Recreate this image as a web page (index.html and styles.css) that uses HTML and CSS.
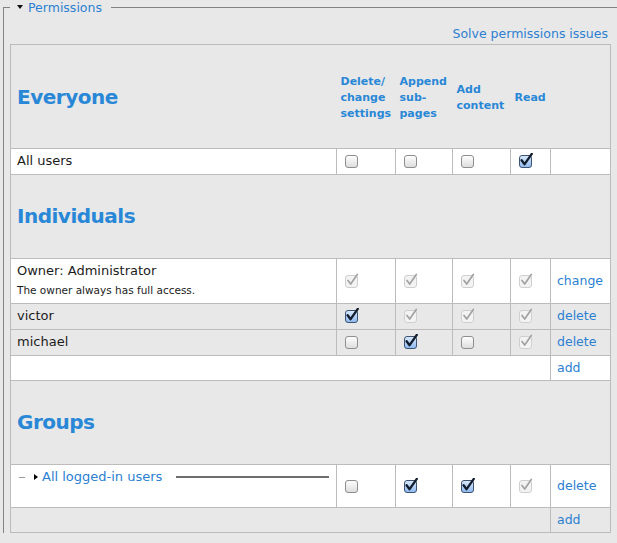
FILE: index.html
```html
<!DOCTYPE html>
<html>
<head>
<meta charset="utf-8">
<title>Permissions</title>
<link rel="stylesheet" href="styles.css">
</head>
<body>
<fieldset class="perm">
  <legend class="perm-legend"><span class="tri-down"></span><a class="lnk" href="#">Permissions</a></legend>
  <div class="solve"><a href="#">Solve permissions issues</a></div>
  <table class="grid">
    <colgroup>
      <col class="c-name"><col class="c-a"><col class="c-b"><col class="c-c"><col class="c-d"><col class="c-e">
    </colgroup>
    <tr class="sect first">
      <td class="h"><h2>Everyone</h2></td>
      <td class="ch">Delete/<br>change<br>settings</td>
      <td class="ch">Append<br>sub-<br>pages</td>
      <td class="ch">Add<br>content</td>
      <td class="ch">Read</td>
      <td class="ch"></td>
    </tr>
    <tr class="w">
      <td class="name">All users</td>
      <td class="cb"><svg class="ck"><use href="#ck-off"/></svg></td>
      <td class="cb"><svg class="ck"><use href="#ck-off"/></svg></td>
      <td class="cb"><svg class="ck"><use href="#ck-off"/></svg></td>
      <td class="cb"><svg class="ck"><use href="#ck-on"/></svg></td>
      <td class="act"></td>
    </tr>
    <tr class="sect">
      <td class="h" colspan="6"><h2>Individuals</h2></td>
    </tr>
    <tr class="w owner">
      <td class="name">Owner: Administrator<div class="desc">The owner always has full access.</div></td>
      <td class="cb"><svg class="ck"><use href="#ck-dis"/></svg></td>
      <td class="cb"><svg class="ck"><use href="#ck-dis"/></svg></td>
      <td class="cb"><svg class="ck"><use href="#ck-dis"/></svg></td>
      <td class="cb"><svg class="ck"><use href="#ck-dis"/></svg></td>
      <td class="act"><a href="#">change</a></td>
    </tr>
    <tr class="g">
      <td class="name">victor</td>
      <td class="cb"><svg class="ck"><use href="#ck-on"/></svg></td>
      <td class="cb"><svg class="ck"><use href="#ck-dis"/></svg></td>
      <td class="cb"><svg class="ck"><use href="#ck-dis"/></svg></td>
      <td class="cb"><svg class="ck"><use href="#ck-dis"/></svg></td>
      <td class="act"><a href="#">delete</a></td>
    </tr>
    <tr class="g">
      <td class="name">michael</td>
      <td class="cb"><svg class="ck"><use href="#ck-off"/></svg></td>
      <td class="cb"><svg class="ck"><use href="#ck-on"/></svg></td>
      <td class="cb"><svg class="ck"><use href="#ck-off"/></svg></td>
      <td class="cb"><svg class="ck"><use href="#ck-dis"/></svg></td>
      <td class="act"><a href="#">delete</a></td>
    </tr>
    <tr class="w addrow">
      <td colspan="5"></td>
      <td class="act"><a href="#">add</a></td>
    </tr>
    <tr class="sect">
      <td class="h" colspan="6"><h2>Groups</h2></td>
    </tr>
    <tr class="w grouprow">
      <td class="name grp-cell">
        <div class="grp"><span class="dash"></span><span class="grp-lg"><span class="tri-right"></span><a href="#">All logged-in users</a></span><span class="line"></span></div>
      </td>
      <td class="cb"><svg class="ck"><use href="#ck-off"/></svg></td>
      <td class="cb"><svg class="ck"><use href="#ck-on"/></svg></td>
      <td class="cb"><svg class="ck"><use href="#ck-on"/></svg></td>
      <td class="cb"><svg class="ck"><use href="#ck-dis"/></svg></td>
      <td class="act"><a href="#">delete</a></td>
    </tr>
    <tr class="g addrow">
      <td colspan="5"></td>
      <td class="act"><a href="#">add</a></td>
    </tr>
  </table>
</fieldset>

<svg class="defs" xmlns="http://www.w3.org/2000/svg">
  <defs>
    <linearGradient id="g-off" x1="0" y1="0" x2="0" y2="1">
      <stop offset="0" stop-color="#ffffff"/>
      <stop offset="1" stop-color="#dcdcdc"/>
    </linearGradient>
    <linearGradient id="g-on" x1="0" y1="0" x2="0" y2="1">
      <stop offset="0" stop-color="#dbeafc"/>
      <stop offset="1" stop-color="#8db8ef"/>
    </linearGradient>
    <symbol id="ck-off" viewBox="0 0 15 15">
      <rect x="0.5" y="2.5" width="12" height="12" rx="2.5" fill="url(#g-off)" stroke="#8e8e8e"/>
    </symbol>
    <symbol id="ck-on" viewBox="0 0 15 15">
      <rect x="0.5" y="2.5" width="12" height="12" rx="2.5" fill="url(#g-on)" stroke="#3d5373"/>
      <path d="M2.6 7.2 L5.6 11.2 L12.8 0.8" fill="none" stroke="#121c2c" stroke-width="2.3" stroke-linecap="round" stroke-linejoin="round"/>
    </symbol>
    <symbol id="ck-dis" viewBox="0 0 15 15">
      <rect x="0.5" y="2.5" width="12" height="12" rx="2.5" fill="#f3f3f3" stroke="#cfcfcf"/>
      <path d="M3 7.4 L5.7 11 L12.3 1.4" fill="none" stroke="#a2a2a2" stroke-width="1.7" stroke-linecap="round" stroke-linejoin="round"/>
    </symbol>
  </defs>
</svg>
</body>
</html>
```
FILE: styles.css
```css
html, body {
  margin: 0;
  padding: 0;
  background: #e8e8e8;
  overflow: hidden;
}
body {
  font-family: "DejaVu Sans", "Liberation Sans", sans-serif;
  font-size: 13px;
  color: #1c1c1c;
}
a {
  color: #2b80d2;
  text-decoration: none;
}

.perm {
  margin: 0 0 0 3px;
  padding: 11px 7px 0 6px;
  border: 1px solid #828282;
  border-right: none;
  border-bottom: none;
  min-width: 0;
}
.perm-legend {
  padding: 0 9px 0 7px;
  font-size: 12.5px;
  line-height: 15px;
}
.tri-down {
  display: inline-block;
  width: 0;
  height: 0;
  border-left: 3px solid transparent;
  border-right: 3px solid transparent;
  border-top: 4px solid #111;
  vertical-align: 3px;
  margin-right: 5px;
}

.solve {
  text-align: right;
  font-size: 12.5px;
  line-height: 16px;
  padding-right: 2px;
  margin-bottom: 2px;
}

.grid {
  width: 600px;
  border-collapse: collapse;
  table-layout: fixed;
  border: 1px solid #bcbcbc;
}
.c-name { width: 326px; }
.c-a { width: 59px; }
.c-b { width: 57px; }
.c-c { width: 58px; }
.c-d { width: 40px; }
.c-e { width: 60px; }

.grid td {
  border: 1px solid #bcbcbc;
  padding: 3px 6px 5px;
  line-height: 17px;
  vertical-align: middle;
  text-align: left;
}
.w { background: #ffffff; }
.g { background: #e8e8e8; }

.grid .sect td {
  border-left: none;
  border-right: none;
  padding: 27px 6px 28px;
}
.grid .sect.first td {
  padding-top: 28px;
  padding-bottom: 27px;
}
.grid .sect td.ch {
  padding: 29px 0 26px 4px;
  font-size: 11px;
  font-weight: bold;
  line-height: 16px;
  color: #2987d7;
}
h2 {
  margin: 0;
  font-size: 20px;
  line-height: 28px;
  font-weight: bold;
  letter-spacing: -0.5px;
  color: #2987d7;
}

.grid td.cb {
  padding: 0 0 0 8px;
}
.ck {
  display: block;
  width: 15px;
  height: 15px;
  margin-top: -2px;
}

.grid td.act {
  font-size: 12.5px;
  padding-left: 6px;
}

.desc {
  font-size: 10.5px;
  line-height: 16px;
  margin-top: 3px;
}

.grid .addrow td {
  padding-top: 3px;
  padding-bottom: 4px;
}

.grid td.grp-cell {
  padding: 4px 7px 22px 6px;
  vertical-align: top;
}
.grp {
  display: flex;
  align-items: center;
  margin-left: 2px;
  line-height: 16px;
}
.dash {
  width: 6px;
  border-top: 1px solid #9a9a9a;
}
.grp-lg {
  padding: 0 14px 0 9px;
  display: flex;
  align-items: center;
}
.tri-right {
  width: 0;
  height: 0;
  border-top: 3.5px solid transparent;
  border-bottom: 3.5px solid transparent;
  border-left: 4px solid #000;
  margin-right: 4px;
}
.line {
  flex: 1;
  border-top: 2px solid #6e6e6e;
}

.defs {
  display: block;
  width: 0;
  height: 0;
  overflow: hidden;
}
```
